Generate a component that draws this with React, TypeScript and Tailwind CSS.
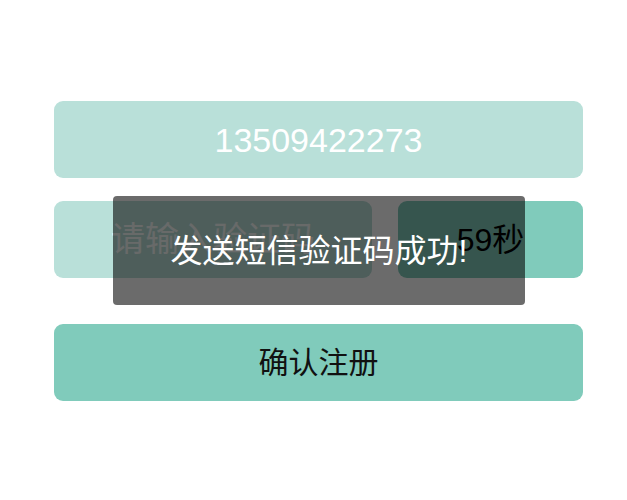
import { useState } from 'react';

const FONT = { fontFamily: '"Liberation Sans", "Noto Sans CJK SC", sans-serif' };

export default function App() {
    const [phone] = useState('13509422273');
    const [code, setCode] = useState('');
    const [seconds] = useState(59);

    return (
        <div className="relative w-full h-[500px] bg-white overflow-hidden" style={FONT}>
            <div className="flex flex-col ml-[54px] pt-[101px] w-[529px]">
                <div className="h-[77px] rounded-[9px] bg-[#b9e0d9] flex items-center justify-center">
                    <span className="text-[34px] text-white leading-none">{phone}</span>
                </div>

                <div className="mt-[23px] flex gap-[26px] h-[77px]">
                    <input
                        type="text"
                        value={code}
                        onChange={e => setCode(e.target.value)}
                        placeholder="请输入验证码"
                        className="w-[318px] h-full rounded-[9px] bg-[#b9e0d9] text-center text-[34px] text-white placeholder:text-white/90 outline-none"
                    />
                    <button className="w-[185px] h-full rounded-[9px] bg-[#80cbbb] text-[32px] text-black flex items-center justify-center">
                        {seconds}秒
                    </button>
                </div>

                <button className="mt-[46px] h-[77px] rounded-[9px] bg-[#80cbbb] text-[30px] text-[#111] flex items-center justify-center">
                    确认注册
                </button>
            </div>

            {/* toast */}
            <div className="absolute left-[113px] top-[196px] w-[412px] h-[109px] rounded-[4px] bg-[rgba(0,0,0,0.58)] flex items-center justify-center">
                <span className="text-[32px] text-white leading-none">发送短信验证码成功!</span>
            </div>
        </div>
    );
}
